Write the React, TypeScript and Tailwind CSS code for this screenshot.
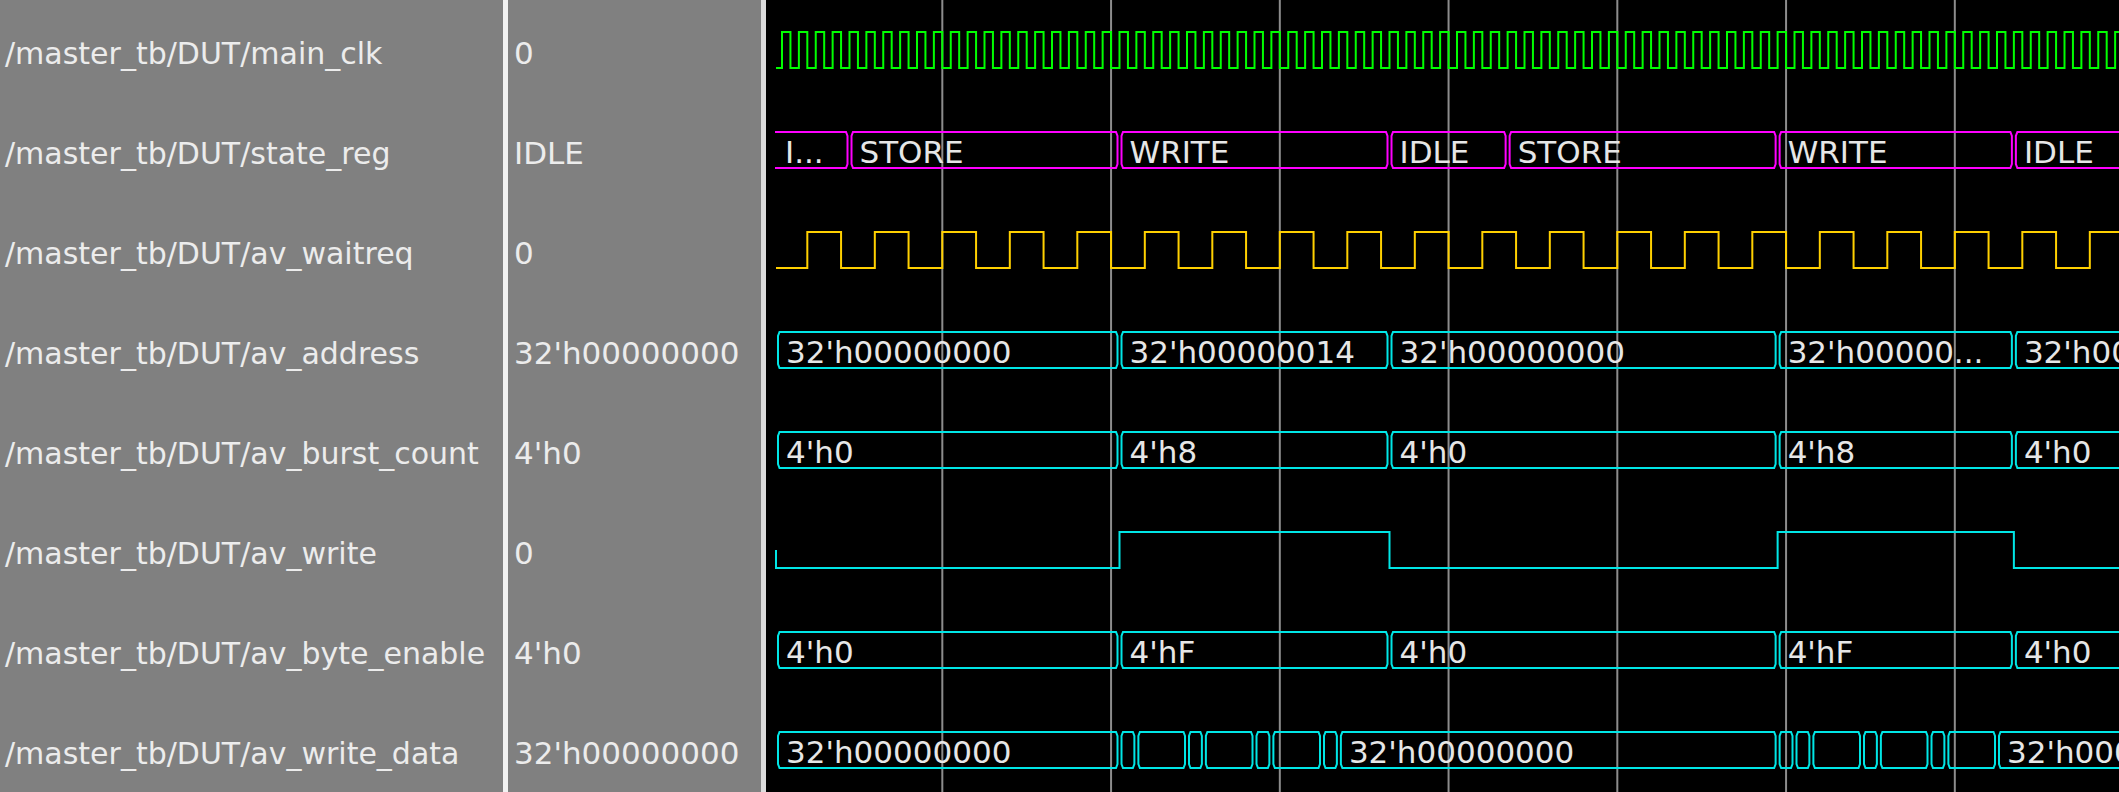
import React from 'react';

// time axis of the wave window (pixels in page coordinates)
const P = 16.875; // one clock period
const X0 = 782; // first rising clock edge
const START = 776; // simulation time 0
const RIGHT = 2119;
const ROW = 100;
const tx = (k: number) => X0 + k * P;

const FONT = '"DejaVu Sans", "Liberation Sans", sans-serif';

const signals = [
  { name: '/master_tb/DUT/main_clk', value: '0' },
  { name: '/master_tb/DUT/state_reg', value: 'IDLE' },
  { name: '/master_tb/DUT/av_waitreq', value: '0' },
  { name: '/master_tb/DUT/av_address', value: "32'h00000000" },
  { name: '/master_tb/DUT/av_burst_count', value: "4'h0" },
  { name: '/master_tb/DUT/av_write', value: '0' },
  { name: '/master_tb/DUT/av_byte_enable', value: "4'h0" },
  { name: '/master_tb/DUT/av_write_data', value: "32'h00000000" },
];

type Bus = { row: number; color: string; edges: number[]; labels: string[]; openLeft?: boolean };

const Z = "32'h00000000";

const buses: Bus[] = [
  {
    row: 1,
    color: '#ff00ff',
    edges: [4, 20, 36, 43, 59, 73],
    labels: ['I...', 'STORE', 'WRITE', 'IDLE', 'STORE', 'WRITE', 'IDLE'],
    openLeft: true,
  },
  {
    row: 3,
    color: '#00e6e6',
    edges: [20, 36, 59, 73],
    labels: [Z, "32'h00000014", Z, "32'h00000...", Z],
  },
  { row: 4, color: '#00e6e6', edges: [20, 36, 59, 73], labels: ["4'h0", "4'h8", "4'h0", "4'h8", "4'h0"] },
  { row: 6, color: '#00e6e6', edges: [20, 36, 59, 73], labels: ["4'h0", "4'hF", "4'h0", "4'hF", "4'h0"] },
  {
    row: 7,
    color: '#00e6e6',
    edges: [20, 21, 24, 25, 28, 29, 32, 33, 59, 60, 61, 64, 65, 68, 69, 72],
    labels: [Z, '', '', '', '', '', '', '', Z, '', '', '', '', '', '', '', Z],
  },
];

function clockPath(top: number, bot: number) {
  let d = `M${START} ${bot} L${tx(0)} ${bot}`;
  for (let k = 0; tx(k) < RIGHT + P; k++) {
    d += ` L${tx(k)} ${top} L${tx(k + 0.5)} ${top} L${tx(k + 0.5)} ${bot} L${tx(k + 1)} ${bot}`;
  }
  return d;
}

function waitreqPath(top: number, bot: number) {
  let d = `M${START} ${bot}`;
  for (let k = 0; tx(1.5 + 4 * k) < RIGHT + P; k++) {
    const r = tx(1.5 + 4 * k);
    const f = tx(3.5 + 4 * k);
    d += ` L${r} ${bot} L${r} ${top} L${f} ${top} L${f} ${bot}`;
  }
  return d + ` L${RIGHT + 20} ${bot}`;
}

function bitPath(top: number, bot: number, edges: number[]) {
  const mid = (top + bot) / 2;
  let d = `M${START} ${mid} L${START} ${bot}`;
  let high = false;
  for (const e of edges) {
    const x = tx(e);
    const from = high ? top : bot;
    const to = high ? bot : top;
    d += ` L${x} ${from} L${x} ${to}`;
    high = !high;
  }
  return d + ` L${RIGHT + 20} ${high ? top : bot}`;
}

function busShape(l: number, r: number, top: number, bot: number, openLeft: boolean) {
  const b = 1.5;
  const v = 4;
  if (openLeft) {
    return `M${l} ${top} L${r - b} ${top} L${r} ${top + v} L${r} ${bot - v} L${r - b} ${bot} L${l} ${bot}`;
  }
  return `M${l + b} ${top} L${r - b} ${top} L${r} ${top + v} L${r} ${bot - v} L${r - b} ${bot} L${l + b} ${bot} L${l} ${bot - v} L${l} ${top + v} Z`;
}

function BusRow({ bus }: { bus: Bus }) {
  const top = bus.row * ROW + 32;
  const bot = bus.row * ROW + 68;
  const bounds = [null, ...bus.edges, null];
  return (
    <g>
      {bus.labels.map((label, i) => {
        const a = bounds[i];
        const z = bounds[i + 1];
        const first = a === null;
        const l = first ? (bus.openLeft ? START - 1 : START + 2) : tx(a as number) + 2;
        const r = z === null ? RIGHT + 40 : tx(z as number) - 2;
        return (
          <g key={i}>
            <path
              d={busShape(l, r, top, bot, first && !!bus.openLeft)}
              fill="none"
              stroke={bus.color}
              strokeWidth={2}
            />
            {label && (
              <text
                x={first && bus.openLeft ? l + 10 : l + 8}
                y={bus.row * ROW + 63}
                fill="#e6e6e6"
                fontSize={31}
                fontFamily={FONT}
              >
                {label}
              </text>
            )}
          </g>
        );
      })}
    </g>
  );
}

function Waves() {
  const grid = [0, 1, 2, 3, 4, 5, 6].map((k) => tx(9.5 + 10 * k));
  return (
    <svg width={1353} height={792} viewBox="766 0 1353 792" className="block">
      {grid.map((x) => (
        <line key={x} x1={x} y1={0} x2={x} y2={792} stroke="#8c8c8c" strokeWidth={2} />
      ))}
      <path d={clockPath(32, 68)} fill="none" stroke="#00ff00" strokeWidth={2} />
      <path d={waitreqPath(232, 268)} fill="none" stroke="#ffd000" strokeWidth={2} />
      <path d={bitPath(532, 568, [20, 36, 59, 73])} fill="none" stroke="#00e6e6" strokeWidth={2} />
      {buses.map((b) => (
        <BusRow key={b.row} bus={b} />
      ))}
    </svg>
  );
}

export default function App() {
  return (
    <div
      className="flex h-[792px] w-[2119px] overflow-hidden bg-black text-[30px] text-[#ececec]"
      style={{ fontFamily: FONT }}
    >
      {/* Signal names */}
      <div className="w-[503px] shrink-0 bg-[#808080]">
        {signals.map((s) => (
          <div key={s.name} className="flex h-[100px] items-center whitespace-nowrap pl-[5px] pt-[6px]">
            {s.name}
          </div>
        ))}
      </div>
      <div className="w-[5px] shrink-0 bg-[#f2f2f2]" />

      {/* Cursor values */}
      <div className="w-[253px] shrink-0 bg-[#808080] text-[31px]">
        {signals.map((s) => (
          <div key={s.name} className="flex h-[100px] items-center whitespace-nowrap pl-[6px] pt-[6px]">
            {s.value}
          </div>
        ))}
      </div>
      <div className="w-[5px] shrink-0 bg-[#dcdcdc]" />

      {/* Wave window */}
      <div className="flex-1 overflow-hidden bg-black">
        <Waves />
      </div>
    </div>
  );
}
